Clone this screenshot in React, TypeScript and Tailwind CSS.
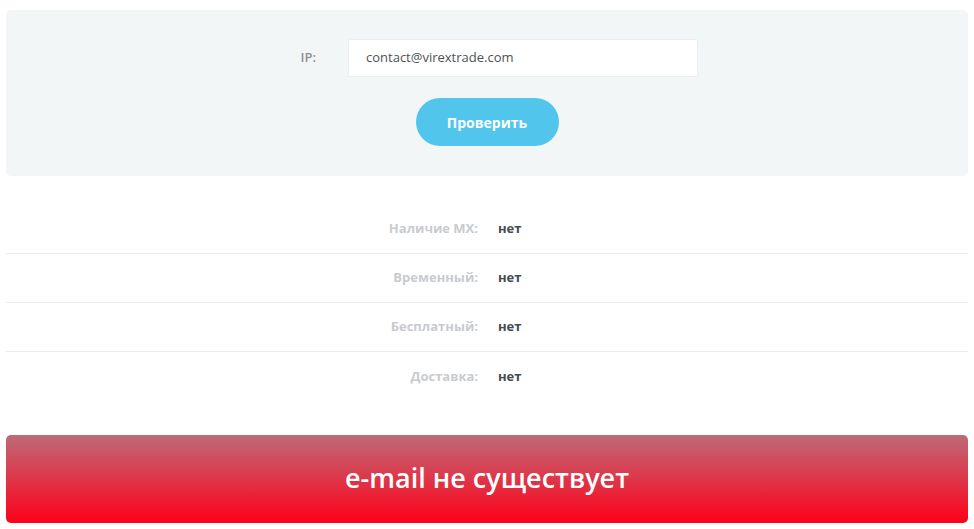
import React from "react";

const rows = [
  { label: "Наличие MX:", value: "нет" },
  { label: "Временный:", value: "нет" },
  { label: "Бесплатный:", value: "нет" },
  { label: "Доставка:", value: "нет" },
];

export default function App() {
  return (
    <div
      className="w-[974px] h-[529px] bg-white px-[6px] pt-[10px] overflow-hidden"
      style={{ fontFamily: '"Open Sans", "Noto Sans", sans-serif' }}
    >
      <div className="h-[166px] rounded-[5px] bg-[#f3f6f7] pt-[29px] flex flex-col items-center">
        <div className="flex items-center">
          <div className="w-[40px] text-right text-[13px] font-semibold text-[#8c9196] mr-[32px]">IP:</div>
          <div className="w-[350px] h-[38px] bg-white border border-[#eceff1] rounded-[2px] flex items-center pl-[17px] text-[13px] text-[#4d5257]">
            contact@virextrade.com
          </div>
        </div>
        <button className="mt-[21px] w-[143px] h-[48px] rounded-full bg-[#52c5ec] text-white text-[14px] font-bold">
          Проверить
        </button>
      </div>

      <div className="mt-[29px]">
        {rows.map((r, i) => (
          <div
            key={r.label}
            className={`grid grid-cols-2 items-center h-[49px] ${i < rows.length - 1 ? "border-b border-[#ececec]" : ""}`}
          >
            <div className="text-right pr-[9px] text-[13px] font-bold text-[#c8cbcf]">{r.label}</div>
            <div className="pl-[11px] text-[13px] font-bold text-[#474b50]">{r.value}</div>
          </div>
        ))}
      </div>

      <div className="mt-[34px] h-[88px] rounded-[5px] bg-linear-to-b/srgb from-[#bd6b78] to-[#ff0019] flex items-center justify-center pb-[2px]">
        <span className="text-white text-[27px] font-semibold">e-mail не существует</span>
      </div>
    </div>
  );
}
